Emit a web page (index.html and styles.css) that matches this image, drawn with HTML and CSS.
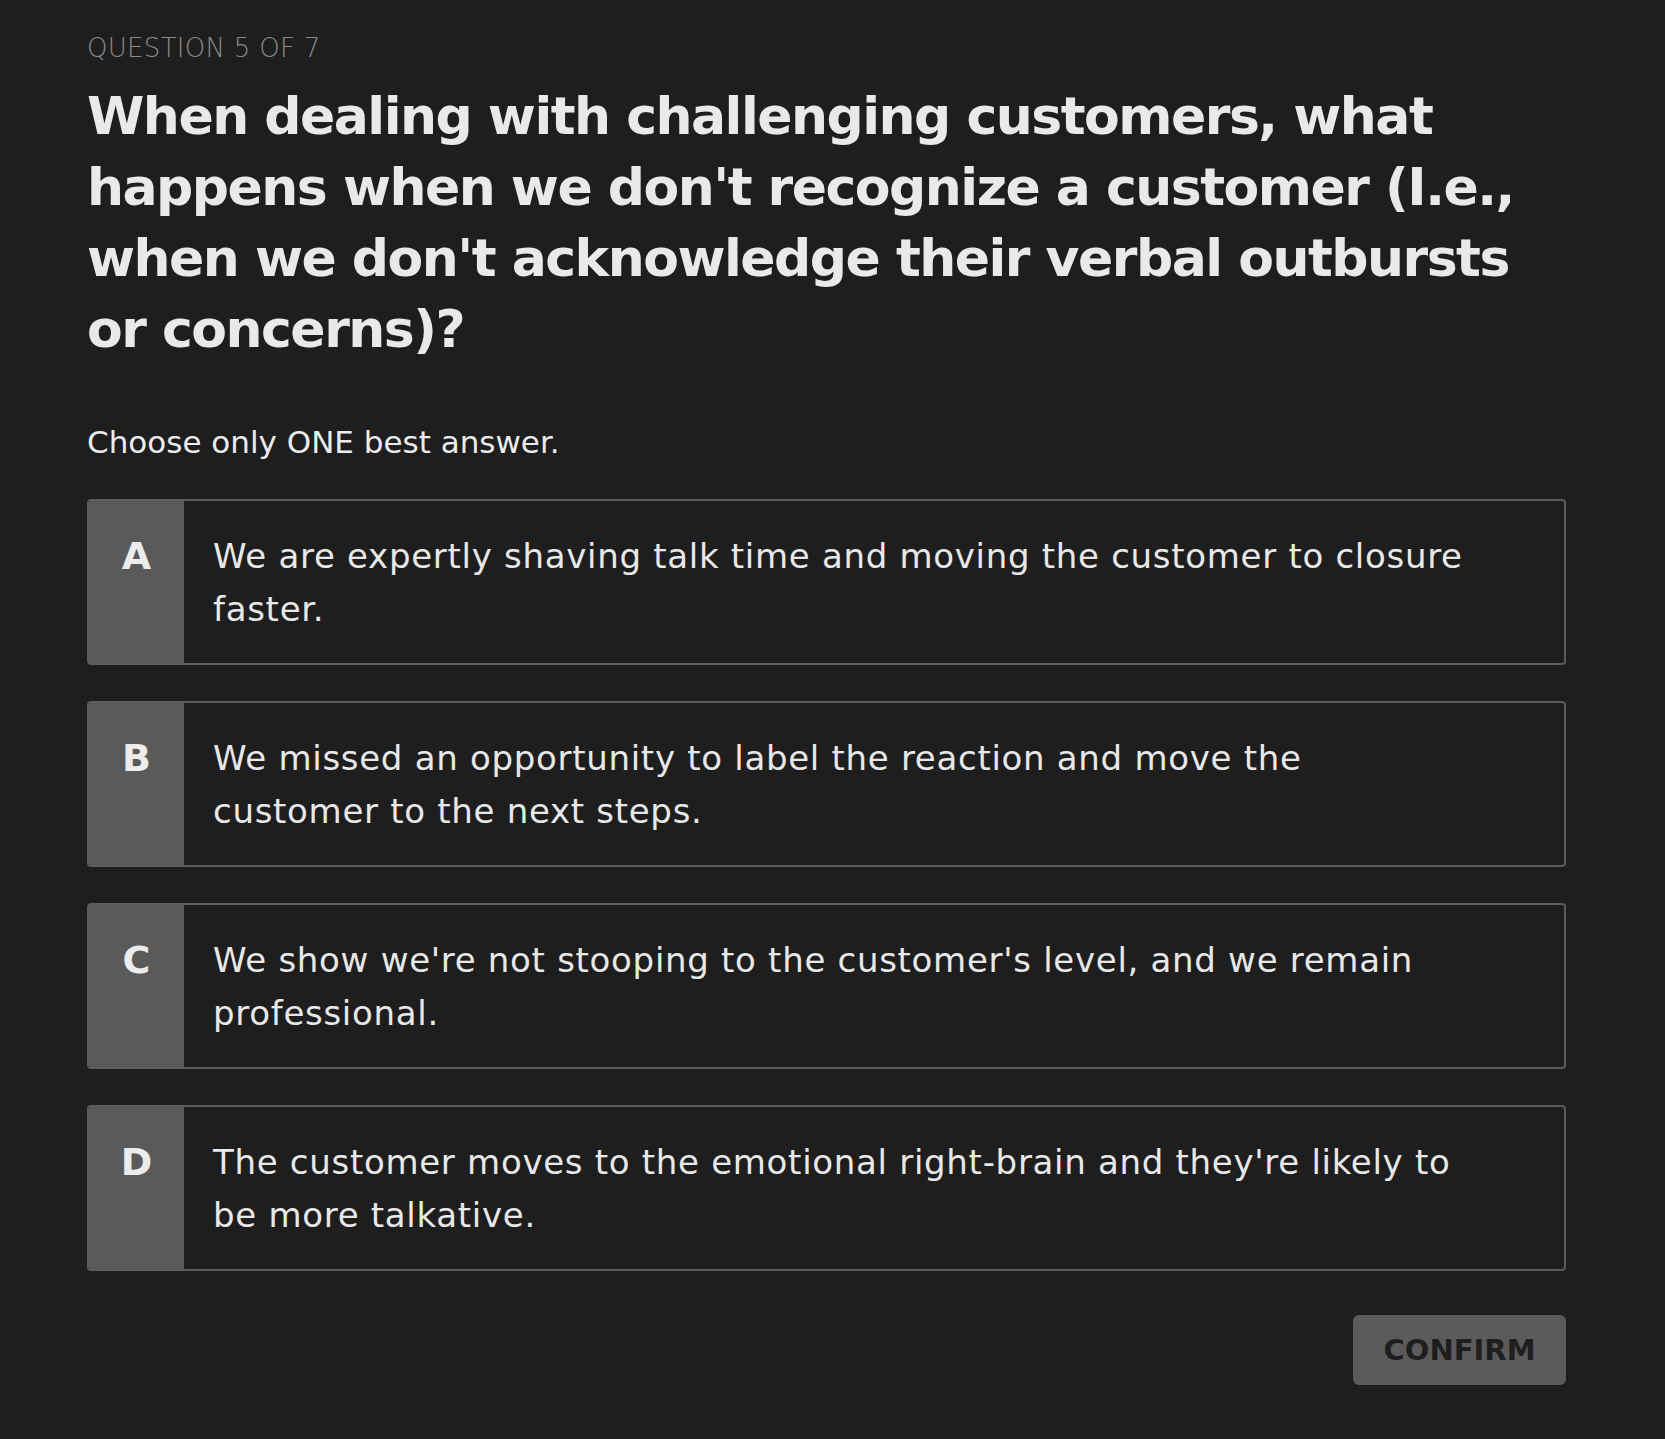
FILE: index.html
```html
<!DOCTYPE html>
<html lang="en">
<head>
<meta charset="utf-8">
<title>Question 5 of 7</title>
<link rel="stylesheet" href="styles.css">
</head>
<body>
<main class="quiz">
  <p class="counter">QUESTION 5 OF 7</p>
  <h1 class="question">When dealing with challenging customers, what happens when we don't recognize a customer (I.e., when we don't acknowledge their verbal outbursts or concerns)?</h1>
  <p class="hint">Choose only ONE best answer.</p>
  <ul class="options">
    <li class="option"><span class="letter">A</span><span class="text">We are expertly shaving talk time and moving the customer to closure faster.</span></li>
    <li class="option"><span class="letter">B</span><span class="text">We missed an opportunity to label the reaction and move the customer to the next steps.</span></li>
    <li class="option"><span class="letter">C</span><span class="text">We show we're not stooping to the customer's level, and we remain professional.</span></li>
    <li class="option"><span class="letter">D</span><span class="text">The customer moves to the emotional right-brain and they're likely to be more talkative.</span></li>
  </ul>
  <div class="actions"><button class="confirm" type="button">CONFIRM</button></div>
</main>
</body>
</html>
```
FILE: styles.css
```css
html, body {
  margin: 0;
  padding: 0;
  background: #1e1e1e;
}
body {
  font-family: "DejaVu Sans", "Noto Sans", sans-serif;
  color: #e8e8e8;
}
.quiz {
  width: 1479px;
  padding: 32px 0 40px 87px;
}
.counter {
  margin: 0;
  font-size: 26px;
  line-height: 32px;
  font-weight: 200;
  color: #8a8a8a;
  letter-spacing: 0.3px;
}
.question {
  margin: 17px 0 0;
  font-size: 52px;
  line-height: 71px;
  font-weight: 700;
  color: #e9e9e9;
  letter-spacing: -1.5px;
}
.hint {
  margin: 57px 0 0;
  font-size: 31px;
  line-height: 40px;
  font-weight: 400;
  color: #ececec;
}
.options {
  list-style: none;
  margin: 37px 0 0;
  padding: 0;
  display: flex;
  flex-direction: column;
  gap: 36px;
}
.option {
  display: flex;
  border: 2px solid #5c5c5c;
  border-radius: 4px;
  overflow: hidden;
  min-height: 162px;
}
.letter {
  flex: 0 0 95px;
  background: #5a5a5a;
  text-align: center;
  font-size: 38px;
  font-weight: 700;
  line-height: 53px;
  padding-top: 29px;
  color: #ececec;
}
.text {
  flex: 1;
  padding: 29px 88px 27px 29px;
  font-size: 34px;
  line-height: 53px;
  letter-spacing: 0.7px;
  color: #e8e8e8;
}
.actions {
  display: flex;
  justify-content: flex-end;
  margin-top: 44px;
}
.confirm {
  width: 213px;
  height: 70px;
  border: none;
  border-radius: 6px;
  background: #5b5b5b;
  color: #1e1e1e;
  font-family: "DejaVu Sans", "Noto Sans", sans-serif;
  font-size: 29px;
  font-weight: 700;
  padding: 0;
}
```
